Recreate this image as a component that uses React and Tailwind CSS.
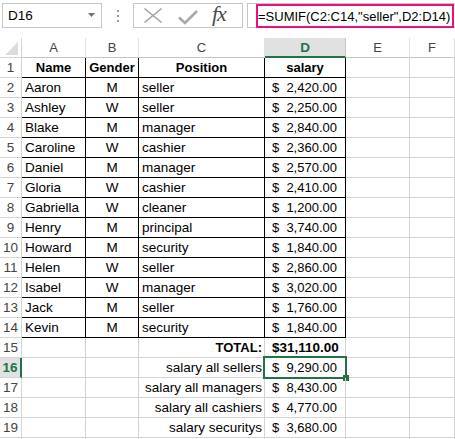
import React from "react";

const data = [
  ["Aaron", "M", "seller", "2,420.00"],
  ["Ashley", "W", "seller", "2,250.00"],
  ["Blake", "M", "manager", "2,840.00"],
  ["Caroline", "W", "cashier", "2,360.00"],
  ["Daniel", "M", "manager", "2,570.00"],
  ["Gloria", "W", "cashier", "2,410.00"],
  ["Gabriella", "W", "cleaner", "1,200.00"],
  ["Henry", "M", "principal", "3,740.00"],
  ["Howard", "M", "security", "1,840.00"],
  ["Helen", "W", "seller", "2,860.00"],
  ["Isabel", "W", "manager", "3,020.00"],
  ["Jack", "M", "seller", "1,760.00"],
  ["Kevin", "M", "security", "1,840.00"],
];

const summary = [
  ["salary all sellers", "9,290.00"],
  ["salary all managers", "8,430.00"],
  ["salary all cashiers", "4,770.00"],
  ["salary securitys", "3,680.00"],
];

const ROW = "grid grid-cols-[22px_64px_53px_126px_81px_64px_1fr] h-[20px]";
const CELL = "h-[20px] border-r border-b leading-[20px] whitespace-nowrap overflow-visible";
const G = "border-[#d4d4d4]";
const B = "border-black";

function RowHead({ n, active }) {
  return (
    <div
      className={
        active
          ? "h-[20px] border-b border-[#d4d4d4] border-r-2 border-r-[#217346] bg-[#e1e1e1] text-center leading-[20px] text-[13.5px] font-bold text-[#217346]"
          : "h-[20px] border-b border-r border-[#d4d4d4] text-center leading-[20px] text-[13.5px] text-[#444]"
      }
    >
      {n}
    </div>
  );
}

function Money({ value, bold, border, children }) {
  return (
    <div className={`${CELL} ${border} relative flex justify-between pl-[7px] pr-[8px] text-[13px] ${bold ? "font-bold" : ""}`}>
      <span>$</span>
      <span>{value}</span>
      {children}
    </div>
  );
}

export default function App() {
  return (
    <div className="w-[455px] h-[439px] overflow-hidden bg-white text-black font-['Liberation_Sans',Arial,sans-serif]">
      {/* Toolbar */}
      <div className="h-[38px] flex items-start pt-[3px]">
        <div className="ml-[2px] w-[100px] h-[25px] border border-[#c6c6c6] flex items-center justify-between pl-[5px] pr-[6px]">
          <span className="text-[13.5px] leading-none">D16</span>
          <svg width="7" height="4" viewBox="0 0 7 4" className="mt-[-2px]">
            <polygon points="0,0 7,0 3.5,4" fill="#6f6f6f" />
          </svg>
        </div>
        <div className="w-[31px] h-[25px] flex flex-col items-center justify-center gap-[3px]">
          <div className="w-[2px] h-[2px] bg-[#a0a0a0]" />
          <div className="w-[2px] h-[2px] bg-[#a0a0a0]" />
          <div className="w-[2px] h-[2px] bg-[#a0a0a0]" />
        </div>
        <div className="w-[110px] h-[25px] border border-[#c6c6c6] flex items-center pl-[9px]">
          <svg width="20" height="17" viewBox="0 0 20 17">
            <path d="M1.5 1.5 L18.5 15.5 M18.5 1.5 L1.5 15.5" stroke="#a3a3a3" strokeWidth="1.6" fill="none" />
          </svg>
          <svg width="20" height="15" viewBox="0 0 20 15" className="ml-[15px] mt-[3px]">
            <path d="M1 7.5 L7 13 L19 1" stroke="#a8a8a8" strokeWidth="2.6" fill="none" />
          </svg>
          <span className="ml-[14px] text-[22px] leading-none italic text-[#4a4a4a] font-['Liberation_Serif',serif] tracking-[-1px] mt-[-3px]">
            fx
          </span>
        </div>
        <div className="ml-[4px] flex-1 h-[25px] border-y border-l border-[#c6c6c6] relative">
          <div className="absolute left-[8px] top-0 bottom-[-1px] right-[1px] border-2 border-[#e8117f] flex items-center">
            <span className="text-[13px] leading-none whitespace-nowrap">=SUMIF(C2:C14,"seller",D2:D14)</span>
          </div>
        </div>
      </div>

      {/* Column headers */}
      <div className={ROW}>
        <div className="h-[20px] border-b border-r border-[#d4d4d4] relative">
          <svg width="20" height="19" viewBox="0 0 20 19" className="absolute left-0 top-0">
            <polygon points="18,4 18,17 5,17" fill="#dcdcdc" />
          </svg>
        </div>
        {["A", "B", "C"].map((c) => (
          <div key={c} className="h-[20px] border-b border-r border-b-[#c6c6c6] border-r-[#e1e1e1] text-center leading-[20px] text-[13px] text-[#444]">
            {c}
          </div>
        ))}
        <div className="h-[20px] border-b-2 border-b-[#217346] border-r border-r-[#c6c6c6] bg-[#e1e1e1] text-center leading-[19px] text-[13.5px] font-bold text-[#217346]">
          D
        </div>
        {["E", "F"].map((c) => (
          <div key={c} className="h-[20px] border-b border-r border-b-[#c6c6c6] border-r-[#e1e1e1] text-center leading-[20px] text-[13px] text-[#444]">
            {c}
          </div>
        ))}
      </div>

      {/* Row 1 */}
      <div className={ROW}>
        <RowHead n={1} />
        <div className={`${CELL} ${B} text-center font-bold text-[13px]`}>Name</div>
        <div className={`${CELL} ${B} text-center font-bold text-[13px]`}>Gender</div>
        <div className={`${CELL} ${B} text-center font-bold text-[13px]`}>Position</div>
        <div className={`${CELL} ${B} text-center font-bold text-[13px]`}>salary</div>
        <div className={`${CELL} ${G}`} />
        <div className={`${CELL} ${G}`} />
      </div>

      {data.map((r, i) => (
        <div key={i} className={ROW}>
          <RowHead n={i + 2} />
          <div className={`${CELL} ${B} pl-[3px] text-[13.5px]`}>{r[0]}</div>
          <div className={`${CELL} ${B} text-center text-[13.5px]`}>{r[1]}</div>
          <div className={`${CELL} ${B} pl-[3px] text-[13.5px]`}>{r[2]}</div>
          <Money value={r[3]} border={B} />
          <div className={`${CELL} ${G}`} />
          <div className={`${CELL} ${G}`} />
        </div>
      ))}

      {/* Row 15 */}
      <div className={ROW}>
        <RowHead n={15} />
        <div className={`${CELL} ${G}`} />
        <div className={`${CELL} ${G}`} />
        <div className={`${CELL} ${G} text-right pr-[2px] font-bold text-[13px]`}>TOTAL:</div>
        <div className={`${CELL} ${G} relative flex justify-between pl-[7px] pr-[8px] text-[13.5px] font-bold`}>
          <span>$</span>
          <span>31,110.00</span>
        </div>
        <div className={`${CELL} ${G}`} />
        <div className={`${CELL} ${G}`} />
      </div>

      {summary.map((s, i) => (
        <div key={i} className={ROW}>
          <RowHead n={16 + i} active={i === 0} />
          <div className={`${CELL} ${G}`} />
          <div className={`${CELL} ${G}`} />
          <div className={`${CELL} ${G} text-right pr-[2px] text-[13.5px]`}>{s[0]}</div>
          <Money value={s[1]} border={G}>
            {i === 0 && (
              <>
                <div className="absolute -left-[2px] -top-[2px] -right-[2px] -bottom-[2px] border-2 border-[#217346] pointer-events-none" />
                <div className="absolute left-[78px] top-[17px] w-[6px] h-[6px] bg-[#217346]" />
              </>
            )}
          </Money>
          <div className={`${CELL} ${G}`} />
          <div className={`${CELL} ${G}`} />
        </div>
      ))}

      <div className={ROW}>
        <div className="h-[20px] border-b border-r border-[#d4d4d4]" />
        <div className={`${CELL} ${G}`} />
        <div className={`${CELL} ${G}`} />
        <div className={`${CELL} ${G}`} />
        <div className={`${CELL} ${G}`} />
        <div className={`${CELL} ${G}`} />
        <div className={`${CELL} ${G}`} />
      </div>
    </div>
  );
}
